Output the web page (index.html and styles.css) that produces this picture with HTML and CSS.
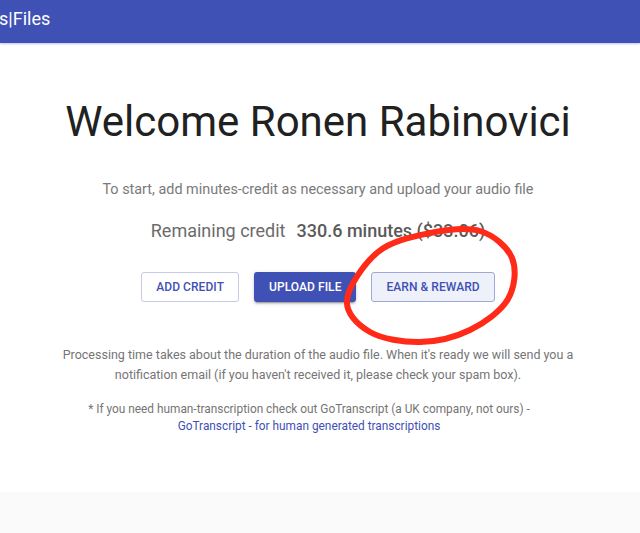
FILE: index.html
```html
<!DOCTYPE html>
<html lang="en">
<head>
<meta charset="utf-8">
<title>Files</title>
<link rel="stylesheet" href="styles.css">
</head>
<body>
<header class="topbar"><span class="brand">s|Files</span></header>
<main class="content">
  <h1 class="welcome">Welcome Ronen Rabinovici</h1>
  <p class="intro">To start, add minutes-credit as necessary and upload your audio file</p>
  <p class="credit"><span class="credit-label">Remaining credit</span><span class="credit-amount">330.6 minutes ($33.06)</span></p>
  <div class="actions">
    <button class="btn btn-outline">ADD CREDIT</button>
    <button class="btn btn-filled">UPLOAD FILE</button>
    <button class="btn btn-outline btn-hover">EARN &amp; REWARD</button>
  </div>
  <p class="note">Processing time takes about the duration of the audio file. When it's ready we will send you a notification email (if you haven't received it, please check your spam box).</p>
  <p class="human">* If you need human-transcription check out GoTranscript (a UK company, not ours) -<br><a class="human-link" href="#">GoTranscript - for human generated transcriptions</a></p>
</main>
<footer class="footer"></footer>
<svg class="annotation" width="640" height="533" viewBox="0 0 640 533">
  <path d="M347 300 C348.3 286.7 364.2 263.2 378 252 C391.8 240.8 413 236.5 430 233 C447 229.5 466.3 226.8 480 231 C493.7 235.2 507.3 246.7 512 258 C516.7 269.3 515 287 508 299 C501 311 484.7 322.8 470 330 C455.3 337.2 436.7 341.7 420 342 C403.3 342.3 382.2 339 370 332 C357.8 325 345.7 313.3 347 300 Z" fill="none" stroke="#ff2a17" stroke-width="6" stroke-linejoin="round"/>
</svg>
</body>
</html>
```

FILE: styles.css
```css
html, body {
  margin: 0;
  padding: 0;
}
body {
  font-family: Roboto, "Noto Sans", "Liberation Sans", sans-serif;
  background: #fafafa;
  width: 640px;
  height: 533px;
  overflow: hidden;
  position: relative;
}
.topbar {
  height: 43px;
  background: #3f51b5;
  display: flex;
  align-items: center;
  box-shadow: 0 1px 2px rgba(63, 81, 181, 0.35);
  position: relative;
  z-index: 1;
}
.brand {
  color: #ffffff;
  font-size: 18px;
  margin-left: -1px;
  margin-top: -6px;
}
.content {
  background: #ffffff;
  display: flex;
  flex-direction: column;
  align-items: center;
  text-align: center;
  padding: 53px 4px 57px 0;
}
.welcome {
  margin: 0;
  font-size: 42px;
  line-height: 52px;
  font-weight: 400;
  color: #212121;
}
.intro {
  margin: 32px 0 0;
  font-size: 14.4px;
  line-height: 20px;
  color: #7a7a7a;
}
.credit {
  margin: 19px 0 0;
  font-size: 18px;
  line-height: 24px;
  color: #6b6b6b;
}
.credit-label {
  margin-right: 11px;
}
.credit-amount {
  font-weight: 500;
  color: #5a5a5a;
}
.actions {
  margin-top: 29px;
  display: flex;
  gap: 15px;
}
.btn {
  height: 30px;
  padding: 0 14px;
  font-family: inherit;
  font-size: 12px;
  font-weight: 500;
  letter-spacing: 0.005em;
  border-radius: 3px;
  cursor: pointer;
}
.btn-outline {
  background: #ffffff;
  color: #3f51b5;
  border: 1px solid #c5cae9;
}
.btn-hover {
  background: #eef0fa;
  border-color: #9fa8da;
}
.btn-filled {
  padding: 0 15px;
  background: #3f51b5;
  color: #ffffff;
  border: none;
  box-shadow: 0 3px 1px -2px rgba(0,0,0,.2), 0 2px 2px 0 rgba(0,0,0,.14), 0 1px 5px 0 rgba(0,0,0,.12);
}
.note {
  margin: 43px 0 0;
  max-width: 522px;
  font-size: 12.5px;
  line-height: 20px;
  color: #757575;
}
.human {
  margin: 16px 18px 0 0;
  font-size: 11.85px;
  line-height: 17px;
  color: #757575;
}
.human-link {
  color: #3f51b5;
  text-decoration: none;
}
.footer {
  height: 60px;
  background: #fafafa;
}
.annotation {
  position: absolute;
  left: 0;
  top: 0;
  pointer-events: none;
  z-index: 2;
}
```
